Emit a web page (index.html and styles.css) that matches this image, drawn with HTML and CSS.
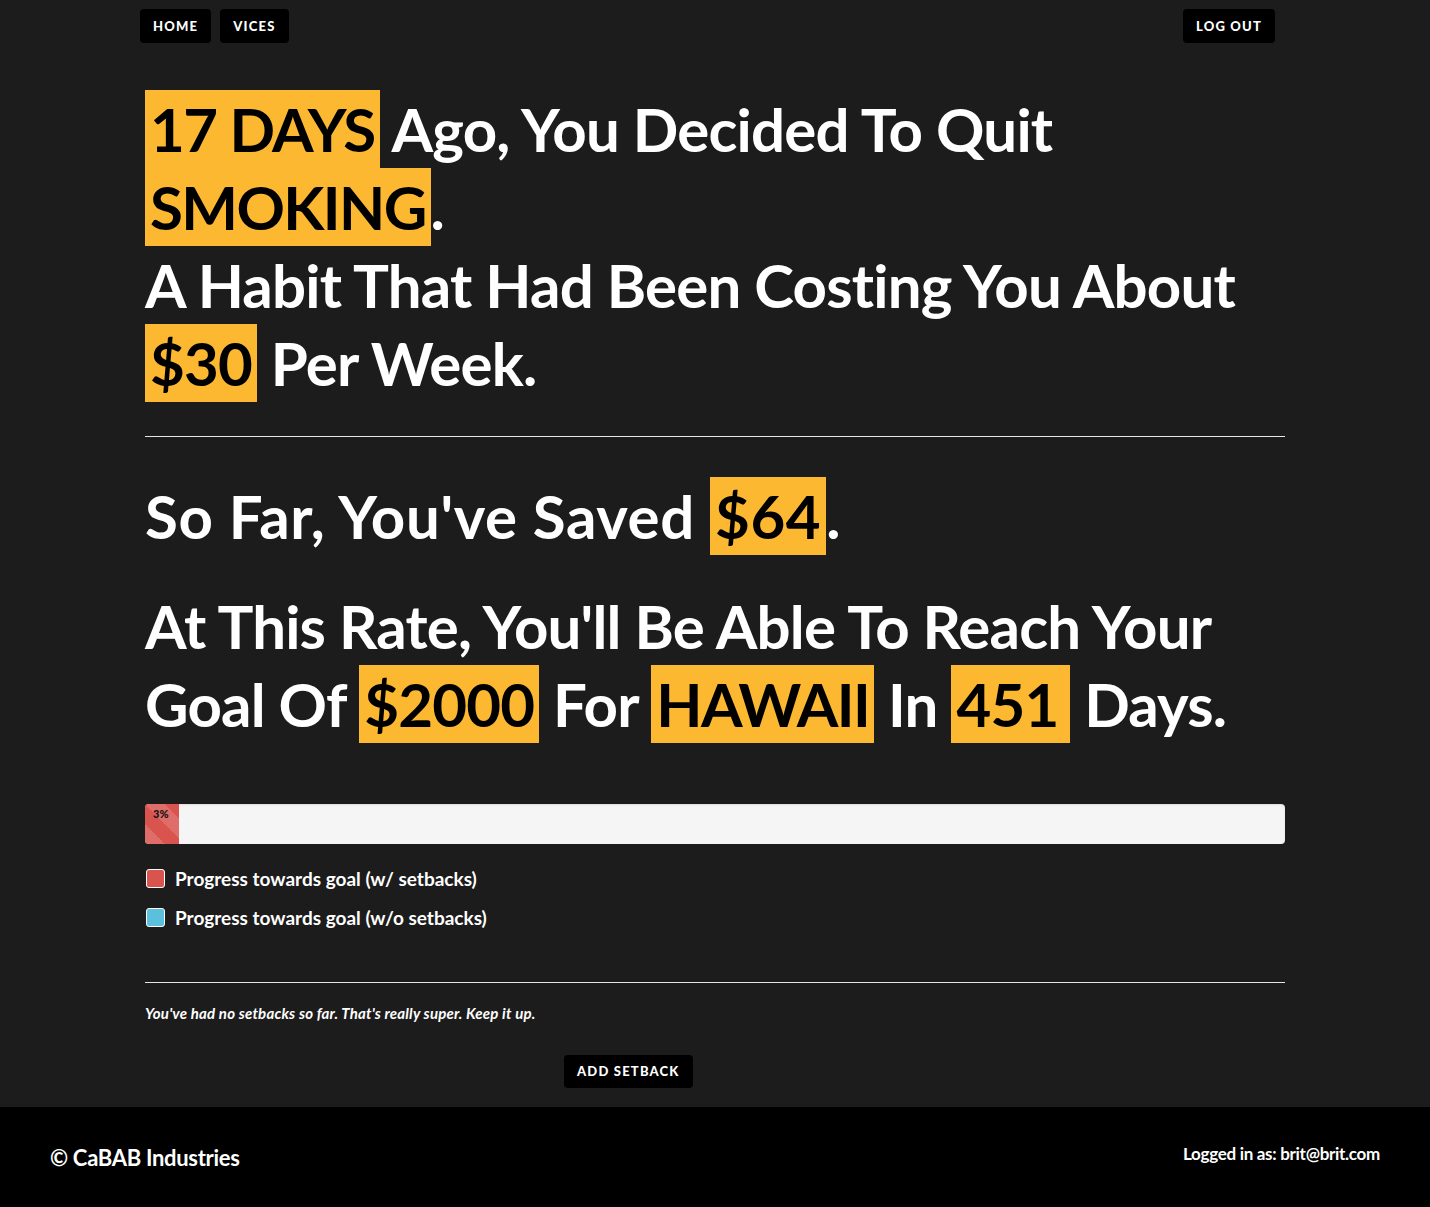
FILE: index.html
```html
<!DOCTYPE html>
<html lang="en">
<head>
<meta charset="utf-8">
<title>Vices</title>
<link rel="stylesheet" href="styles.css">
</head>
<body>
<div class="page">
  <nav class="topnav">
    <div class="nav-left">
      <a class="btn" href="#">Home</a>
      <a class="btn" href="#">Vices</a>
    </div>
    <a class="btn" href="#">Log out</a>
  </nav>

  <main class="container">
    <h1 class="headline first">
      <span class="hl caps">17 DAYS</span> Ago, You Decided To Quit<br>
      <span class="hl caps">SMOKING</span>.<br>
      A Habit That Had Been Costing You About<br>
      <span class="hl">$30</span> Per Week.
    </h1>

    <hr class="rule">

    <h1 class="headline saved">So Far, You've Saved <span class="hl">$64</span>.</h1>

    <h1 class="headline goal">
      At This Rate, You'll Be Able To Reach Your<br>
      Goal Of <span class="hl">$2000</span> For <span class="hl caps">HAWAII</span> In <span class="hl trail">451</span> Days.
    </h1>

    <div class="progress">
      <div class="progress-bar" style="width: 3%">3%</div>
    </div>

    <ul class="legend">
      <li><span class="swatch red"></span>Progress towards goal (w/ setbacks)</li>
      <li><span class="swatch blue"></span>Progress towards goal (w/o setbacks)</li>
    </ul>

    <hr class="rule rule2">

    <p class="note">You've had no setbacks so far. That's really super. Keep it up.</p>

    <div class="actions">
      <a class="btn" href="#">Add setback</a>
    </div>
  </main>

  <footer class="footer">
    <span class="copy">© CaBAB Industries</span>
    <span class="logged">Logged in as: brit@brit.com</span>
  </footer>
</div>
</body>
</html>
```

FILE: styles.css
```css
* { box-sizing: border-box; }

html, body {
  margin: 0;
  padding: 0;
  background: #1c1c1c;
  color: #fff;
  font-family: "Lato", "Open Sans", sans-serif;
}

.page {
  min-height: 1207px;
  display: flex;
  flex-direction: column;
}

.topnav {
  display: flex;
  justify-content: space-between;
  align-items: flex-start;
  padding: 9px 155px 0 140px;
}

.nav-left {
  display: flex;
  gap: 9px;
}

.btn {
  display: inline-block;
  background: #000;
  color: #fff;
  text-decoration: none;
  text-transform: uppercase;
  font-weight: 900;
  font-size: 13px;
  letter-spacing: 1.2px;
  line-height: 34px;
  height: 34px;
  padding: 0 13px;
  border-radius: 4px;
}

.container {
  width: 1140px;
  margin: 0 auto;
  flex: 1;
}

.headline {
  margin: 0;
  font-size: 60px;
  font-weight: 700;
  line-height: 78px;
  letter-spacing: -0.8px;
  color: #fff;
}

.headline.first { margin-top: 47px; }

.hl {
  display: inline-block;
  background: #fcb831;
  color: #000;
  padding: 0 5px;
  height: 78px;
  line-height: 78px;
  vertical-align: top;
}

.hl.caps { letter-spacing: -1.6px; }
.hl.trail { padding-right: 12px; }

.rule {
  border: 0;
  border-top: 1px solid #e6e6e6;
  margin: 34px 0 0;
  height: 0;
}

.headline.saved {
  margin-top: 40px;
  letter-spacing: 0.6px;
}

.headline.goal { margin-top: 32px; }

.progress {
  margin-top: 61px;
  height: 40px;
  background: #f5f5f5;
  border-radius: 4px;
  overflow: hidden;
  box-shadow: inset 0 1px 2px rgba(0,0,0,.1);
}

.progress-bar {
  height: 100%;
  background-color: #d9534f;
  background-image: linear-gradient(45deg, rgba(255,255,255,.15) 25%, transparent 25%, transparent 50%, rgba(255,255,255,.15) 50%, rgba(255,255,255,.15) 75%, transparent 75%, transparent);
  background-size: 40px 40px;
  color: #111;
  font-size: 11px;
  font-weight: 900;
  padding: 4px 0 0 8px;
  line-height: 12px;
}

.legend {
  list-style: none;
  margin: 15px 0 0;
  padding: 0;
}

.legend li {
  display: flex;
  align-items: center;
  gap: 10px;
  height: 39px;
  font-size: 19px;
  font-weight: 700;
  letter-spacing: 0;
  padding-left: 1px;
}

.swatch {
  width: 19px;
  height: 19px;
  border: 1.5px solid #fff;
  border-radius: 3px;
}

.swatch.red { background: #d9534f; }
.swatch.blue { background: #5bc0de; }

.rule2 { margin-top: 45px; }

.note {
  margin: 21px 0 0;
  font-size: 15px;
  font-style: italic;
  font-weight: 700;
  letter-spacing: 0.2px;
}

.actions {
  margin-top: 33px;
  padding-left: 419px;
}

.actions .btn {
  height: 33px;
  line-height: 33px;
}

.footer {
  margin-top: 18px;
  height: 100px;
  background: #000;
  display: flex;
  justify-content: space-between;
  align-items: center;
  padding: 0 50px;
}

.copy {
  font-size: 22px;
  font-weight: 700;
  letter-spacing: -0.3px;
}

.logged {
  font-size: 17px;
  font-weight: 700;
  letter-spacing: -0.3px;
  margin-top: -8px;
}
```
